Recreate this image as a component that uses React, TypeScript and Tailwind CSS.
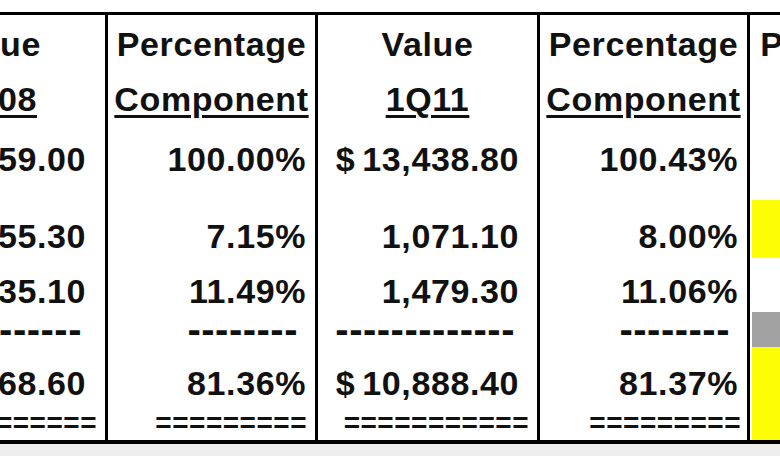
import type { ReactNode } from 'react';

const font = "font-['Liberation_Sans',Arial,sans-serif] font-bold text-[#111]";

function Cell({ className = '', children }: { className?: string; children?: ReactNode }) {
  return <div className={`flex items-start overflow-hidden whitespace-nowrap ${className}`}>{children}</div>;
}

function Txt({ children, className = '' }: { children: ReactNode; className?: string }) {
  return <span className={`shrink-0 text-[34px] leading-[34px] tracking-[0.6px] ${className}`}>{children}</span>;
}

function Money({ v }: { v: string }) {
  return (
    <Txt>
      <span className="mr-[7px]">$</span>
      {v}
    </Txt>
  );
}

function Dashes({ n }: { n: number }) {
  return <span className="shrink-0 text-[40px] leading-[35px] tracking-[0.5px]">{'-'.repeat(n)}</span>;
}

function Equals({ n }: { n: number }) {
  return <span className="shrink-0 text-[28px] leading-[28px] tracking-[0.5px]">{'='.repeat(n)}</span>;
}

const sep = 'border-r-[3px] border-black';

export default function App() {
  return (
    <div className={`w-[780px] h-[456px] overflow-hidden bg-[#eeeeee] ${font}`}>
      <div className="h-[12px] bg-white" />
      <div className="grid w-[960px] grid-cols-[108px_210px_222px_210px_210px] grid-rows-[58px_52px_75px_58px_54px_35px_58px_35px] border-y-[3px] border-b-4 border-black bg-white">
        {/* header line 1 */}
        <Cell className={`${sep} justify-end pr-[64px] pt-[12px]`}><Txt>Value</Txt></Cell>
        <Cell className={`${sep} justify-center pt-[12px]`}><Txt>Percentage</Txt></Cell>
        <Cell className={`${sep} justify-center pt-[12px]`}><Txt>Value</Txt></Cell>
        <Cell className={`${sep} justify-center pt-[12px]`}><Txt>Percentage</Txt></Cell>
        <Cell className="justify-center pt-[12px]"><Txt>Percentage</Txt></Cell>

        {/* header line 2 */}
        <Cell className={`${sep} justify-end pr-[68px] pt-[9px]`}>
          <Txt className="underline decoration-[2.5px] underline-offset-[4px]">1Q08</Txt>
        </Cell>
        <Cell className={`${sep} justify-center pt-[9px]`}>
          <Txt className="underline decoration-[2.5px] underline-offset-[4px]">Component</Txt>
        </Cell>
        <Cell className={`${sep} justify-center pt-[9px]`}>
          <Txt className="underline decoration-[2.5px] underline-offset-[4px]">1Q11</Txt>
        </Cell>
        <Cell className={`${sep} justify-center pt-[9px]`}>
          <Txt className="underline decoration-[2.5px] underline-offset-[4px]">Component</Txt>
        </Cell>
        <Cell className="justify-center pt-[9px]">
          <Txt className="underline decoration-[2.5px] underline-offset-[4px]">Change</Txt>
        </Cell>

        {/* totals */}
        <Cell className={`${sep} justify-end pr-[19px] pt-[17px]`}><Money v="13,359.00" /></Cell>
        <Cell className={`${sep} justify-end pr-[9px] pt-[17px]`}><Txt>100.00%</Txt></Cell>
        <Cell className={`${sep} justify-end pr-[18px] pt-[17px]`}><Money v="13,438.80" /></Cell>
        <Cell className={`${sep} justify-end pr-[9px] pt-[17px]`}><Txt>100.43%</Txt></Cell>
        <Cell />

        {/* first component */}
        <Cell className={`${sep} justify-end pr-[19px] pt-[19px]`}><Txt>955.30</Txt></Cell>
        <Cell className={`${sep} justify-end pr-[9px] pt-[19px]`}><Txt>7.15%</Txt></Cell>
        <Cell className={`${sep} justify-end pr-[18px] pt-[19px]`}><Txt>1,071.10</Txt></Cell>
        <Cell className={`${sep} justify-end pr-[9px] pt-[19px]`}><Txt>8.00%</Txt></Cell>
        <Cell className="ml-[2px] bg-[#fdfd06]" />

        {/* second component */}
        <Cell className={`${sep} justify-end pr-[19px] pt-[16px]`}><Txt>1,535.10</Txt></Cell>
        <Cell className={`${sep} justify-end pr-[9px] pt-[16px]`}><Txt>11.49%</Txt></Cell>
        <Cell className={`${sep} justify-end pr-[18px] pt-[16px]`}><Txt>1,479.30</Txt></Cell>
        <Cell className={`${sep} justify-end pr-[9px] pt-[16px]`}><Txt>11.06%</Txt></Cell>
        <Cell />

        {/* single rule */}
        <Cell className={`${sep} justify-end pr-[23px]`}><Dashes n={10} /></Cell>
        <Cell className={`${sep} justify-end pr-[17px]`}><Dashes n={8} /></Cell>
        <Cell className={`${sep} justify-end pr-[22px]`}><Dashes n={13} /></Cell>
        <Cell className={`${sep} justify-end pr-[17px]`}><Dashes n={8} /></Cell>
        <Cell className="ml-[2px] bg-[#a2a2a2]" />

        {/* remainder */}
        <Cell className={`${sep} justify-end pr-[19px] pt-[19px]`}><Money v="10,868.60" /></Cell>
        <Cell className={`${sep} justify-end pr-[9px] pt-[19px]`}><Txt>81.36%</Txt></Cell>
        <Cell className={`${sep} justify-end pr-[18px] pt-[19px]`}><Money v="10,888.40" /></Cell>
        <Cell className={`${sep} justify-end pr-[9px] pt-[19px]`}><Txt>81.37%</Txt></Cell>
        <Cell className="ml-[2px] bg-[#fdfd06]" />

        {/* double rule */}
        <Cell className={`${sep} justify-end pr-[8px] pt-[4px]`}><Equals n={8} /></Cell>
        <Cell className={`${sep} justify-end pr-[8px] pt-[4px]`}><Equals n={9} /></Cell>
        <Cell className={`${sep} justify-end pr-[8px] pt-[4px]`}><Equals n={11} /></Cell>
        <Cell className={`${sep} justify-end pr-[6px] pt-[4px]`}><Equals n={9} /></Cell>
        <Cell className="ml-[2px] bg-[#fdfd06]" />
      </div>
    </div>
  );
}
